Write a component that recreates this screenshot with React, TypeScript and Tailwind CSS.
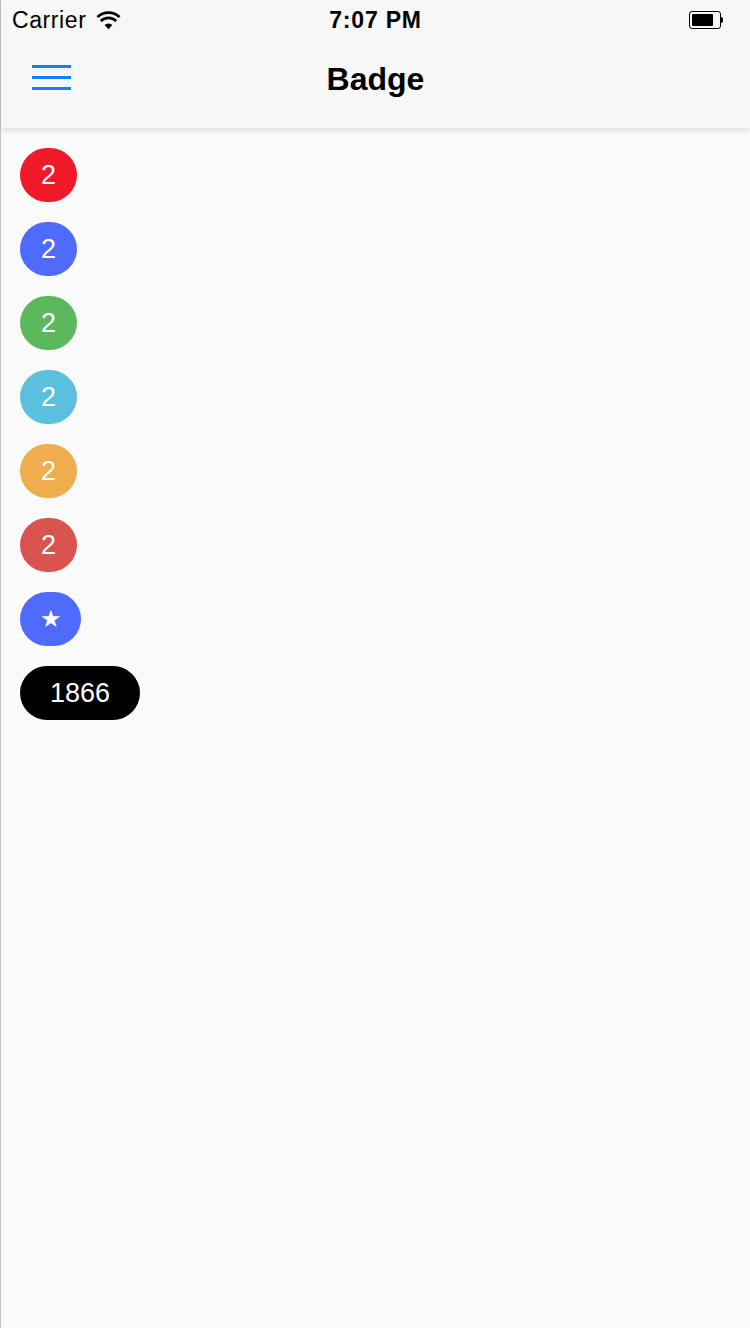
import React from "react";

const font = { fontFamily: '"Liberation Sans", Arial, sans-serif' };

function Badge({ bg, children, w }: { bg: string; children: React.ReactNode; w: string }) {
  return (
    <div className={`h-[54px] ${w} ${bg} rounded-full flex items-center justify-center text-white text-[27px] leading-none`}>
      {children}
    </div>
  );
}

export default function App() {
  return (
    <div className="w-[750px] h-[1334px] bg-white flex flex-col" style={font}>
      <div className="flex-1 flex flex-col border-l border-[#c4c4c4] bg-[#fafafa] h-[1328px] max-h-[1328px]">
        <div className="bg-[#f7f7f7] h-[128px] shrink-0 shadow-[0_2px_6px_rgba(0,0,0,0.12)] relative z-10 flex flex-col">
          <div className="h-[40px] flex items-center justify-between pl-[11px] pr-[27px] relative">
            <div className="flex items-center gap-[10px] text-[23px] tracking-[0.6px] text-black">
              <span>Carrier</span>
              <svg width="25" height="19" viewBox="0 0 24 18">
                <path d="M12 17.5 L8.2 13.3 A5.5 5.5 0 0 1 15.8 13.3 Z" fill="#000" />
                <path d="M4.6 9.5 A10.5 10.5 0 0 1 19.4 9.5" stroke="#000" strokeWidth="2.6" fill="none" />
                <path d="M1.4 5.8 A15 15 0 0 1 22.6 5.8" stroke="#000" strokeWidth="2.6" fill="none" />
              </svg>
            </div>
            <div className="absolute left-0 right-0 text-center text-[23px] tracking-[0.8px] font-bold text-black pointer-events-none">7:07 PM</div>
            <div className="flex items-center">
              <div className="w-[32px] h-[18px] border-[1.5px] border-black rounded-[3px] p-[2px] flex">
                <div className="w-[21px] h-full bg-black rounded-[1px]" />
              </div>
              <div className="w-[2px] h-[6px] bg-black rounded-r-sm" />
            </div>
          </div>
          <div className="flex-1 flex items-center relative pb-[10px]">
            <div className="absolute left-[31px] top-[25px] flex flex-col gap-[8px]">
              <div className="w-[39px] h-[3px] bg-[#157efb]" />
              <div className="w-[39px] h-[3px] bg-[#157efb]" />
              <div className="w-[39px] h-[3px] bg-[#157efb]" />
            </div>
            <div className="w-full text-center text-[32px] text-black font-bold">Badge</div>
          </div>
        </div>
        <div className="flex flex-col items-start gap-[20px] pt-[20px] pl-[19px]">
          <Badge bg="bg-[#f0192a]" w="w-[57px]">2</Badge>
          <Badge bg="bg-[#4f6bfe]" w="w-[57px]">2</Badge>
          <Badge bg="bg-[#5cb85c]" w="w-[57px]">2</Badge>
          <Badge bg="bg-[#5bc0de]" w="w-[57px]">2</Badge>
          <Badge bg="bg-[#f0ad4e]" w="w-[57px]">2</Badge>
          <Badge bg="bg-[#d9534f]" w="w-[57px]">2</Badge>
          <Badge bg="bg-[#4f6bfe]" w="w-[61px]"><span className="text-[24px]">★</span></Badge>
          <Badge bg="bg-black" w="w-[120px]">1866</Badge>
        </div>
      </div>
    </div>
  );
}
